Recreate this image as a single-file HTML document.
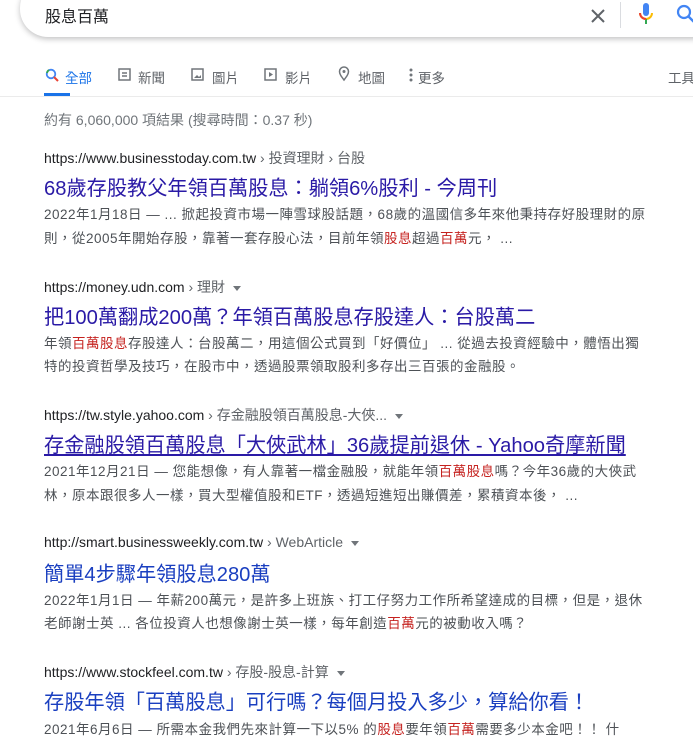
<!DOCTYPE html>
<html><head><meta charset="utf-8"><style>
body{margin:0;width:693px;height:737px;overflow:hidden;background:#fff;font-family:"Liberation Sans","Noto Sans CJK TC",sans-serif;position:relative}
.a{position:absolute;white-space:nowrap}
.url{font-size:14px;color:#202124;left:44px}
.url span{color:#5f6368}
.t{font-size:20.2px;left:44px;color:#2a1aa6}
.s{font-size:13.5px;color:#4d5156;left:44px;letter-spacing:0.5px}
.r{color:#c5221f}
.tab{font-size:13.5px;color:#5f6368;top:67px}
.arr{display:inline-block;border-left:4px solid transparent;border-right:4px solid transparent;border-top:5px solid #70757a;margin-left:8px;vertical-align:middle}
</style></head><body>
<div class="a" style="left:20px;top:-20px;width:700px;height:57px;border-radius:28px;box-shadow:0 2px 6px rgba(32,33,36,.28);background:#fff"></div>
<div class="a" style="left:45px;top:3px;font-size:16px;color:#202124">股息百萬</div>
<svg class="a" style="left:588px;top:6px" width="20" height="20"><path d="M4 4L16 16M16 4L4 16" stroke="#5f6368" stroke-width="2"/></svg>
<div class="a" style="left:620px;top:2px;width:1px;height:26px;background:#dadce0"></div>
<svg class="a" style="left:638px;top:2px" width="18" height="26"><rect x="5" y="1" width="6" height="13" rx="3" fill="#4285f4"/><path d="M2 11a6 6 0 0 0 12 0" stroke="#fbbc05" stroke-width="2" fill="none"/><path d="M8 17v5" stroke="#34a853" stroke-width="2"/><path d="M2 11a6 6 0 0 0 6 6" stroke="#ea4335" stroke-width="2" fill="none"/></svg>
<svg class="a" style="left:676px;top:4px" width="20" height="22"><circle cx="8" cy="8" r="6" stroke="#4285f4" stroke-width="2.2" fill="none"/><path d="M12 12l6 6" stroke="#4285f4" stroke-width="2.4"/></svg>
<svg class="a" style="left:45px;top:68px" width="14" height="14"><circle cx="6" cy="6" r="4.3" stroke="#4285f4" stroke-width="1.8" fill="none"/><path d="M9 9l4 4" stroke="#ea4335" stroke-width="2"/><path d="M2 5a4 4 0 0 1 2-3" stroke="#34a853" stroke-width="1.8" fill="none"/></svg>
<div class="a tab" style="left:65px;color:#1a73e8">全部</div>
<div class="a" style="left:44px;top:93px;width:26px;height:3px;background:#1a73e8"></div>
<svg class="a" style="left:118px;top:68px" width="13" height="13"><rect x="1" y="1" width="11" height="11" fill="none" stroke="#70757a" stroke-width="1.5"/><path d="M4 5h5M4 8h5" stroke="#70757a" stroke-width="1.5"/></svg>
<div class="a tab" style="left:138px">新聞</div>
<svg class="a" style="left:191px;top:68px" width="13" height="13"><rect x="1" y="1" width="11" height="11" fill="none" stroke="#70757a" stroke-width="1.5"/><path d="M3 10l3-3 2 2 2-2v3z" fill="#70757a"/></svg>
<div class="a tab" style="left:212px">圖片</div>
<svg class="a" style="left:264px;top:68px" width="13" height="13"><rect x="1" y="1" width="11" height="11" fill="none" stroke="#70757a" stroke-width="1.5"/><path d="M5 4l4 2.5-4 2.5z" fill="#70757a"/></svg>
<div class="a tab" style="left:285px">影片</div>
<svg class="a" style="left:338px;top:66px" width="12" height="16"><path d="M6 14C3 10 1.5 8 1.5 5.5a4.5 4.5 0 0 1 9 0C10.5 8 9 10 6 14z" fill="none" stroke="#70757a" stroke-width="1.5"/><circle cx="6" cy="5.5" r="1.5" fill="#70757a"/></svg>
<div class="a tab" style="left:358px">地圖</div>
<svg class="a" style="left:409px;top:68px" width="4" height="14"><circle cx="2" cy="2" r="1.5" fill="#70757a"/><circle cx="2" cy="7" r="1.5" fill="#70757a"/><circle cx="2" cy="12" r="1.5" fill="#70757a"/></svg>
<div class="a tab" style="left:418px">更多</div>
<div class="a tab" style="left:668px">工具</div>
<div class="a" style="left:0;top:96px;width:693px;height:1px;background:#ebebeb"></div>
<div class="a" style="left:44px;top:110px;font-size:14px;color:#70757a">約有 6,060,000 項結果 (搜尋時間：0.37 秒)</div>

<div class="a url" style="top:148px">https://www.businesstoday.com.tw<span> › 投資理財 › 台股</span></div>
<div class="a t" style="top:172px">68歲存股教父年領百萬股息：躺領6%股利 - 今周刊</div>
<div class="a s" style="top:203px">2022年1月18日 — ... 掀起投資市場一陣雪球股話題，68歲的溫國信多年來他秉持存好股理財的原</div>
<div class="a s" style="top:227px">則，從2005年開始存股，靠著一套存股心法，目前年領<span class="r">股息</span>超過<span class="r">百萬</span>元， ...</div>

<div class="a url" style="top:277px">https://money.udn.com<span> › 理財</span><i class="arr"></i></div>
<div class="a t" style="top:301px">把100萬翻成200萬？年領百萬股息存股達人：台股萬二</div>
<div class="a s" style="top:332px">年領<span class="r">百萬股息</span>存股達人：台股萬二，用這個公式買到「好價位」 ... 從過去投資經驗中，體悟出獨</div>
<div class="a s" style="top:355px">特的投資哲學及技巧，在股市中，透過股票領取股利多存出三百張的金融股。</div>

<div class="a url" style="top:405px">https://tw.style.yahoo.com<span> › 存金融股領百萬股息-大俠...</span><i class="arr"></i></div>
<div class="a t" style="top:429px;text-decoration:underline">存金融股領百萬股息「大俠武林」36歲提前退休 - Yahoo奇摩新聞</div>
<div class="a s" style="top:460px">2021年12月21日 — 您能想像，有人靠著一檔金融股，就能年領<span class="r">百萬股息</span>嗎？今年36歲的大俠武</div>
<div class="a s" style="top:484px">林，原本跟很多人一樣，買大型權值股和ETF，透過短進短出賺價差，累積資本後， ...</div>

<div class="a url" style="top:534px">http://smart.businessweekly.com.tw<span> › WebArticle</span><i class="arr"></i></div>
<div class="a t" style="top:558px;color:#1a3fc0">簡單4步驟年領股息280萬</div>
<div class="a s" style="top:589px">2022年1月1日 — 年薪200萬元，是許多上班族、打工仔努力工作所希望達成的目標，但是，退休</div>
<div class="a s" style="top:612px">老師謝士英 ... 各位投資人也想像謝士英一樣，每年創造<span class="r">百萬</span>元的被動收入嗎？</div>

<div class="a url" style="top:662px">https://www.stockfeel.com.tw<span> › 存股-股息-計算</span><i class="arr"></i></div>
<div class="a t" style="top:686px;color:#1a3fc0">存股年領「百萬股息」可行嗎？每個月投入多少，算給你看！</div>
<div class="a s" style="top:718px">2021年6月6日 — 所需本金我們先來計算一下以5% 的<span class="r">股息</span>要年領<span class="r">百萬</span>需要多少本金吧！！ 什</div>
</body></html>
